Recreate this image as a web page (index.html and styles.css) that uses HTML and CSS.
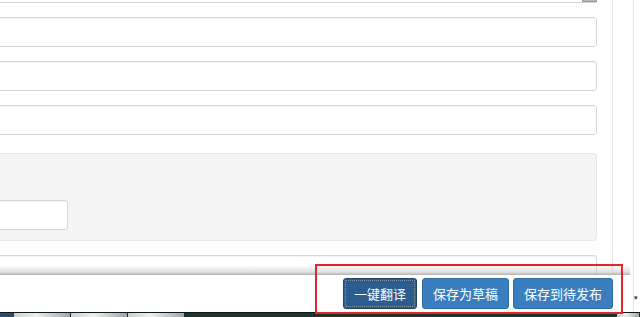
FILE: index.html
```html
<!DOCTYPE html>
<html lang="zh-CN">
<head>
<meta charset="utf-8">
<title>编辑</title>
<link rel="stylesheet" href="styles.css">
</head>
<body>
<div class="page">
  <div class="main">
    <div class="form">
      <div class="textarea-tail"><span class="grip"></span></div>
      <div class="field"></div>
      <div class="field"></div>
      <div class="field"></div>
      <div class="well">
        <div class="field short"></div>
      </div>
      <div class="field"></div>
    </div>
    <div class="gutter"></div>
    <div class="rail"></div>
    <div class="edge"><span class="caret">&#9662;</span></div>
  </div>
  <div class="taskbar">
    <span class="seg dark"></span>
    <span class="seg light"></span>
    <span class="seg light"></span>
    <span class="seg light"></span>
    <span class="seg fill"></span>
    <span class="seg light small"></span>
  </div>
  <div class="footer">
    <div class="actions">
      <button class="btn btn-active" type="button">一键翻译</button>
      <button class="btn" type="button">保存为草稿</button>
      <button class="btn" type="button">保存到待发布</button>
    </div>
  </div>
  <div class="annot"></div>
</div>
</body>
</html>
```

FILE: styles.css
```css
html, body {
  margin: 0;
  padding: 0;
  background: #ffffff;
  font-family: "Noto Sans CJK SC", "Noto Sans", sans-serif;
  overflow: hidden;
}

.page {
  width: 640px;
  height: 317px;
  position: relative;
  overflow: hidden;
}

.main {
  display: flex;
  height: 312px;
  overflow: hidden;
}

.form {
  flex: none;
  width: 607px;
  margin-left: -10px;
  display: flex;
  flex-direction: column;
  gap: 14px;
}

.textarea-tail {
  height: 2px;
  border-bottom: 1px solid #d4d4d4;
  position: relative;
  flex: none;
}

.grip {
  position: absolute;
  right: 0;
  top: -2px;
  width: 15px;
  height: 4px;
  background: #b8b8b8;
  border: 1px solid #9a9a9a;
  box-sizing: border-box;
}

.field {
  flex: none;
  height: 30px;
  box-sizing: border-box;
  border: 1px solid #d6d6d6;
  border-radius: 3px;
  background: #fff;
  box-shadow: inset 0 1px 1px rgba(0, 0, 0, 0.05);
}

.well {
  flex: none;
  margin-top: 4px;
  height: 88px;
  box-sizing: border-box;
  background: #f4f4f4;
  border: 1px solid #e6e6e6;
  border-radius: 4px;
  padding-top: 46px;
  margin-bottom: 0;
}

.field.short {
  width: 77px;
}

.gutter {
  flex: none;
  width: 15px;
}

.rail {
  flex: none;
  width: 20px;
  border-left: 1px solid #e6e6e6;
  border-right: 1px solid #e2e2e2;
}

.edge {
  flex: 1;
  position: relative;
}

.caret {
  position: absolute;
  left: 0;
  top: 294px;
  font-size: 7px;
  color: #333;
  line-height: 1;
}

.taskbar {
  height: 5px;
  display: flex;
  background: #1e2e2c;
  border-top: 1px solid #0e1616;
  box-sizing: border-box;
}

.seg {
  height: 100%;
}

.seg.dark {
  width: 14px;
  background: #2c4b6a;
}

.seg.light {
  width: 56px;
  background: linear-gradient(to right, #c9cfd2, #eef0f1 40%, #9ea6aa);
  margin-right: 1px;
}

.seg.fill {
  flex: 1;
  background: #1f3431;
}

.seg.small {
  width: 22px;
}

.footer {
  position: absolute;
  left: 0;
  top: 275px;
  width: 630px;
  height: 37px;
  background: #ffffff;
  box-sizing: border-box;
  display: flex;
  justify-content: flex-end;
  align-items: flex-start;
  padding: 3px 17px 0 0;
}

.footer::before {
  content: "";
  position: absolute;
  left: 0;
  right: 0;
  top: -10px;
  height: 10px;
  background: linear-gradient(to bottom, rgba(255, 255, 255, 0), rgba(200, 200, 200, 0.55) 70%, rgba(170, 170, 170, 0.9));
}

.actions {
  display: flex;
  gap: 4px;
}

.btn {
  height: 31px;
  padding: 0 10px;
  border: 1px solid #2e6da4;
  border-radius: 3px;
  background: #3a7ebf;
  color: #ffffff;
  font-family: "Noto Sans CJK SC", "Noto Sans", sans-serif;
  font-size: 13px;
  line-height: 29px;
  cursor: pointer;
}

.btn-active {
  background: #2b5e8f;
  border-color: #1c4468;
  outline: 1px dotted #7c93a8;
  outline-offset: -3px;
  margin-right: 1px;
}

.annot {
  position: absolute;
  left: 315px;
  top: 264px;
  width: 308px;
  height: 50px;
  box-sizing: border-box;
  border: 2px solid #e0262a;
}
```
